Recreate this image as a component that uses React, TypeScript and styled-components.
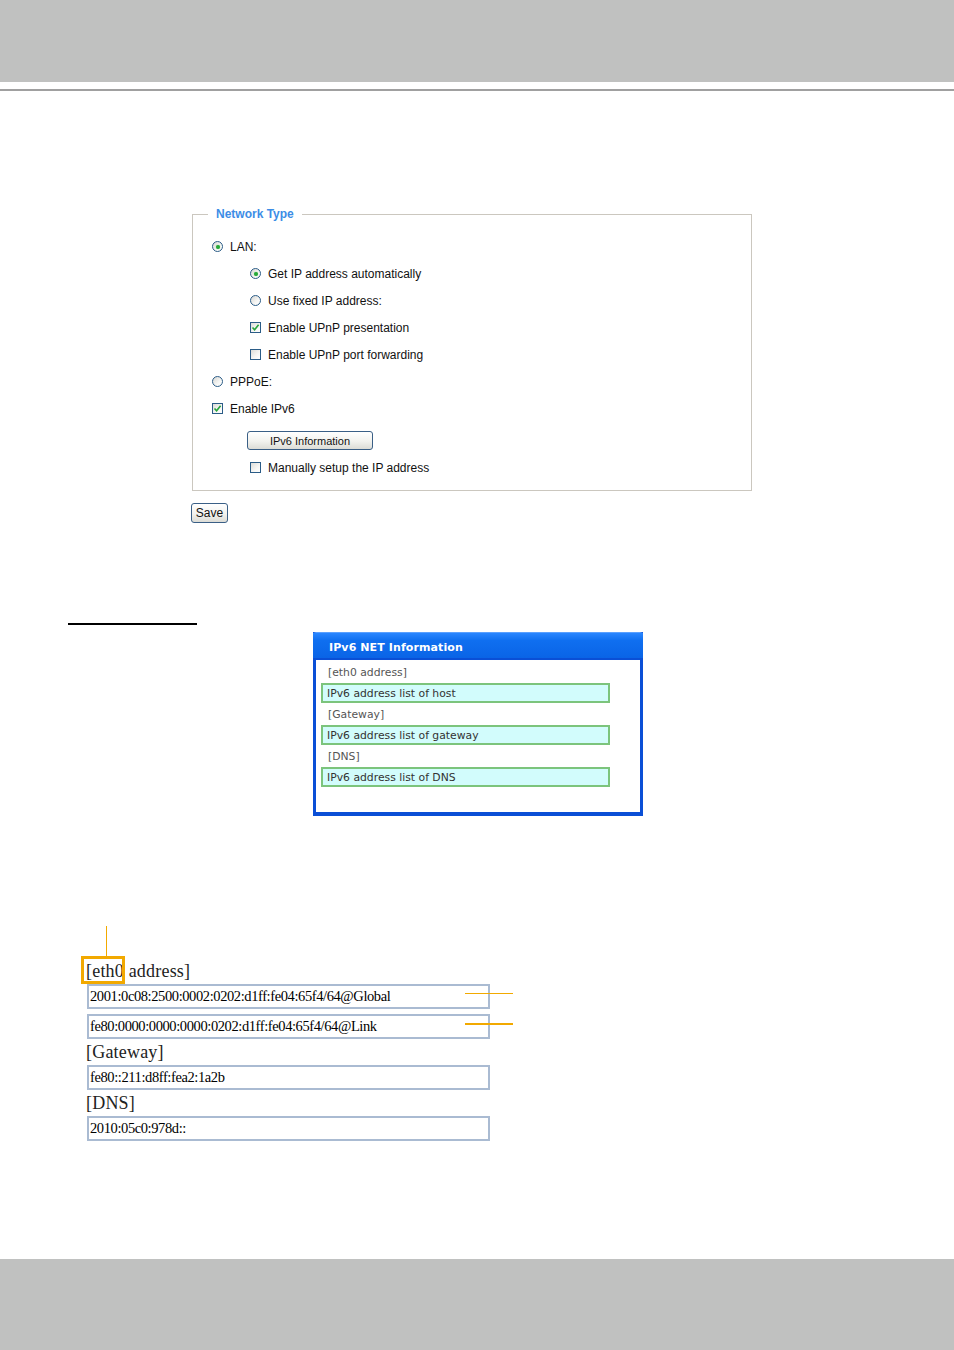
import React from "react";
import styled, { createGlobalStyle } from "styled-components";

const GlobalStyle = createGlobalStyle`
  html, body {
    margin: 0;
    padding: 0;
    background: #ffffff;
  }
  body {
    font-family: "Liberation Sans", Arial, sans-serif;
  }
`;

const Page = styled.div`
  width: 954px;
  min-height: 1350px;
  display: flex;
  flex-direction: column;
`;

const TopBar = styled.div`
  height: 82px;
  background: #c0c1c0;
`;

const TopRule = styled.div`
  height: 2px;
  margin-top: 7px;
  background: #a0a0a0;
`;

const Footer = styled.div`
  margin-top: auto;
  height: 91px;
  background: #c0c1c0;
`;

const Content = styled.div`
  padding-top: 116px;
  display: flex;
  flex-direction: column;
`;

const Fieldset = styled.fieldset`
  margin: 0 0 0 192px;
  width: 560px;
  box-sizing: border-box;
  border: 1px solid #cbc7bf;
  padding: 12px 0 9px 19px;
  min-width: 0;
`;

const Legend = styled.legend`
  margin-left: -4px;
  padding: 0 8px;
  font-family: "Liberation Sans", Arial, sans-serif;
  font-size: 12px;
  font-weight: bold;
  color: #3c8de6;
`;

const Row = styled.div<{ indent?: boolean; gapTop?: number }>`
  height: 27px;
  display: flex;
  align-items: center;
  gap: 7px;
  padding-left: ${({ indent }) => (indent ? "38px" : "0")};
  margin-top: ${({ gapTop }) => (gapTop ? `${gapTop}px` : "0")};
  font-size: 12px;
  color: #111;
`;

const RadioMark = styled.span<{ checked?: boolean }>`
  width: 11px;
  height: 11px;
  box-sizing: border-box;
  border-radius: 50%;
  border: 1px solid #2b5c87;
  background: linear-gradient(135deg, #d6d6d2 0%, #f6f6f4 60%, #ffffff 100%);
  display: inline-flex;
  align-items: center;
  justify-content: center;
  flex: none;
  &::after {
    content: "";
    width: 4px;
    height: 4px;
    border-radius: 50%;
    background: ${({ checked }) => (checked ? "#27a83a" : "transparent")};
    box-shadow: ${({ checked }) => (checked ? "0 0 1px #6ccf6c" : "none")};
  }
`;

const CheckMark = styled.span`
  width: 11px;
  height: 11px;
  box-sizing: border-box;
  border: 1px solid #2b5c87;
  background: linear-gradient(135deg, #dcdcd8 0%, #f6f6f4 60%, #ffffff 100%);
  display: inline-flex;
  align-items: center;
  justify-content: center;
  flex: none;
`;

const Label = styled.span`
  line-height: 1;
`;

const InfoButton = styled.button`
  width: 126px;
  height: 19px;
  margin-left: 35px;
  padding: 0;
  border: 1px solid #3a5f86;
  border-radius: 3px;
  background: linear-gradient(#ffffff 0%, #f2f2ee 55%, #dcdcd6 100%);
  font-family: "Liberation Sans", Arial, sans-serif;
  font-size: 11px;
  color: #111;
`;

const SaveButton = styled.button`
  align-self: flex-start;
  margin: 12px 0 0 191px;
  width: 37px;
  height: 20px;
  padding: 0;
  border: 1px solid #3a5f86;
  border-radius: 3px;
  background: linear-gradient(#ffffff 0%, #f2f2ee 55%, #dcdcd6 100%);
  font-family: "Liberation Sans", Arial, sans-serif;
  font-size: 12px;
  color: #111;
`;

const BlankLine = styled.div`
  margin: 100px 0 0 68px;
  width: 129px;
  height: 2px;
  background: #000;
`;

const NetWindow = styled.div`
  margin: 7px 0 0 313px;
  width: 330px;
  box-sizing: border-box;
  border: 3px solid #0a4fd6;
  border-top: 1px solid #5aa0ff;
  border-bottom-width: 4px;
  background: #fff;
`;

const NetTitle = styled.div`
  height: 22px;
  margin: 0 -3px;
  padding: 3px 0 0 16px;
  display: flex;
  align-items: center;
  background: linear-gradient(#2a86ff 0%, #0f6ff0 30%, #0a64e6 100%);
  border-bottom: 2px solid #0a4fd6;
  font-family: "DejaVu Sans", Verdana, sans-serif;
  font-size: 11px;
  font-weight: bold;
  color: #fff;
  letter-spacing: 0.1px;
`;

const NetBody = styled.div`
  padding: 1px 30px 25px 5px;
  display: flex;
  flex-direction: column;
`;

const NetLabel = styled.div`
  height: 22px;
  padding-left: 7px;
  display: flex;
  align-items: center;
  font-family: "DejaVu Sans", Verdana, sans-serif;
  font-size: 10.8px;
  color: #555;
`;

const NetField = styled.div`
  height: 20px;
  box-sizing: border-box;
  border: 2px solid #7cc47c;
  background: #d2fcfc;
  padding-left: 4px;
  display: flex;
  align-items: center;
  font-family: "DejaVu Sans", Verdana, sans-serif;
  font-size: 10.8px;
  color: #333;
`;

const Capture = styled.div`
  position: relative;
  margin: 142px 0 0 86px;
  width: 404px;
  display: flex;
  flex-direction: column;
`;

const CapLabel = styled.div`
  height: 26px;
  display: flex;
  align-items: center;
  font-family: "Liberation Serif", "Times New Roman", serif;
  font-size: 18px;
  color: #222;
  letter-spacing: 0.2px;
`;

const CapField = styled.div<{ spaced?: boolean }>`
  margin-left: 1px;
  margin-top: ${({ spaced }) => (spaced ? "5px" : "0")};
  height: 25px;
  box-sizing: border-box;
  border: 2px solid #aabbd2;
  padding-left: 1px;
  display: flex;
  align-items: center;
  font-family: "Liberation Serif", "Times New Roman", serif;
  font-size: 14.5px;
  letter-spacing: -0.4px;
  color: #000;
  white-space: nowrap;
`;

const MarkBox = styled.div`
  position: absolute;
  left: -5px;
  top: -2px;
  width: 44px;
  height: 28px;
  box-sizing: border-box;
  border: 3px solid #f2a900;
`;

const MarkStem = styled.div`
  position: absolute;
  left: 20px;
  top: -32px;
  width: 1px;
  height: 30px;
  background: #f2a900;
`;

const Pointer = styled.div<{ top: number; thick?: boolean }>`
  position: absolute;
  left: 379px;
  top: ${({ top }) => `${top}px`};
  width: 48px;
  height: ${({ thick }) => (thick ? "2px" : "1px")};
  background: #f2a900;
`;

function Check() {
  return (
    <svg width="9" height="9" viewBox="0 0 9 9">
      <path d="M1.5 4.5 L3.6 6.8 L7.6 1.8" fill="none" stroke="#26a43a" strokeWidth="1.6" />
    </svg>
  );
}

function Radio({ checked, label, indent }: { checked?: boolean; label: string; indent?: boolean }) {
  return (
    <Row indent={indent}>
      <RadioMark checked={checked} />
      <Label>{label}</Label>
    </Row>
  );
}

function Box({ checked, label, indent }: { checked?: boolean; label: string; indent?: boolean }) {
  return (
    <Row indent={indent}>
      <CheckMark>{checked && <Check />}</CheckMark>
      <Label>{label}</Label>
    </Row>
  );
}

export default function App() {
  return (
    <Page>
      <GlobalStyle />
      <TopBar />
      <TopRule />
      <Content>
        <Fieldset>
          <Legend>Network Type</Legend>
          <Radio checked label="LAN:" />
          <Radio indent checked label="Get IP address automatically" />
          <Radio indent label="Use fixed IP address:" />
          <Box indent checked label="Enable UPnP presentation" />
          <Box indent label="Enable UPnP port forwarding" />
          <Radio label="PPPoE:" />
          <Box checked label="Enable IPv6" />
          <Row gapTop={5}>
            <InfoButton>IPv6 Information</InfoButton>
          </Row>
          <Box indent label="Manually setup the IP address" />
        </Fieldset>
        <SaveButton>Save</SaveButton>

        <BlankLine />

        <NetWindow>
          <NetTitle>IPv6 NET Information</NetTitle>
          <NetBody>
            <NetLabel>[eth0 address]</NetLabel>
            <NetField>IPv6 address list of host</NetField>
            <NetLabel>[Gateway]</NetLabel>
            <NetField>IPv6 address list of gateway</NetField>
            <NetLabel>[DNS]</NetLabel>
            <NetField>IPv6 address list of DNS</NetField>
          </NetBody>
        </NetWindow>

        <Capture>
          <CapLabel>[eth0 address]</CapLabel>
          <CapField>2001:0c08:2500:0002:0202:d1ff:fe04:65f4/64@Global</CapField>
          <CapField spaced>fe80:0000:0000:0000:0202:d1ff:fe04:65f4/64@Link</CapField>
          <CapLabel>[Gateway]</CapLabel>
          <CapField>fe80::211:d8ff:fea2:1a2b</CapField>
          <CapLabel>[DNS]</CapLabel>
          <CapField>2010:05c0:978d::</CapField>
          <MarkStem />
          <MarkBox />
          <Pointer top={35} />
          <Pointer top={65} thick />
        </Capture>
      </Content>
      <Footer />
    </Page>
  );
}
